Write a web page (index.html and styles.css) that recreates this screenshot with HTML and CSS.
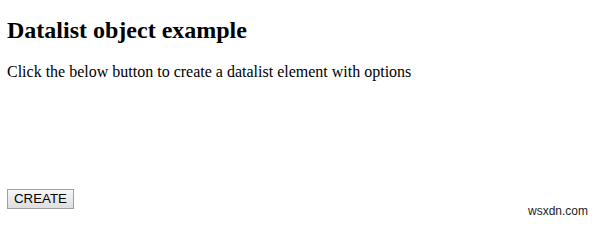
FILE: index.html
```html
<!DOCTYPE html>
<html>
<head>
<meta charset="utf-8">
<link rel="stylesheet" href="styles.css">
</head>
<body>
<h2 class="title">Datalist object example</h2>
<p class="intro">Click the below button to create a datalist element with options</p>
<div class="spacer"></div>
<button class="create">CREATE</button>
<div class="watermark">wsxdn.com</div>
</body>
</html>
```
FILE: styles.css
```css
html, body {
  background: #fff;
}
body {
  margin: 0;
  padding: 8px 8px 0 7px;
  font-family: "Liberation Serif", "Times New Roman", serif;
  font-size: 16px;
  color: #000;
  position: relative;
  height: 231px;
  box-sizing: border-box;
}
.title {
  font-size: 24px;
  font-weight: bold;
  margin: 9px 0 19px;
}
.intro {
  margin: 0;
}
.spacer {
  height: 108px;
}
.create {
  font-family: "Liberation Sans", Arial, sans-serif;
  font-size: 13.3px;
  color: #000;
  padding: 1px 6px;
  border: 1px solid #a0a0a0;
  border-radius: 0;
  background: linear-gradient(#f6f6f6, #dedede);
  height: 20px;
  line-height: 16px;
  margin: 0;
  display: block;
}
.watermark {
  position: absolute;
  right: 11px;
  top: 204px;
  font-family: "Liberation Sans", Arial, sans-serif;
  font-size: 12px;
  color: #222;
}
```
